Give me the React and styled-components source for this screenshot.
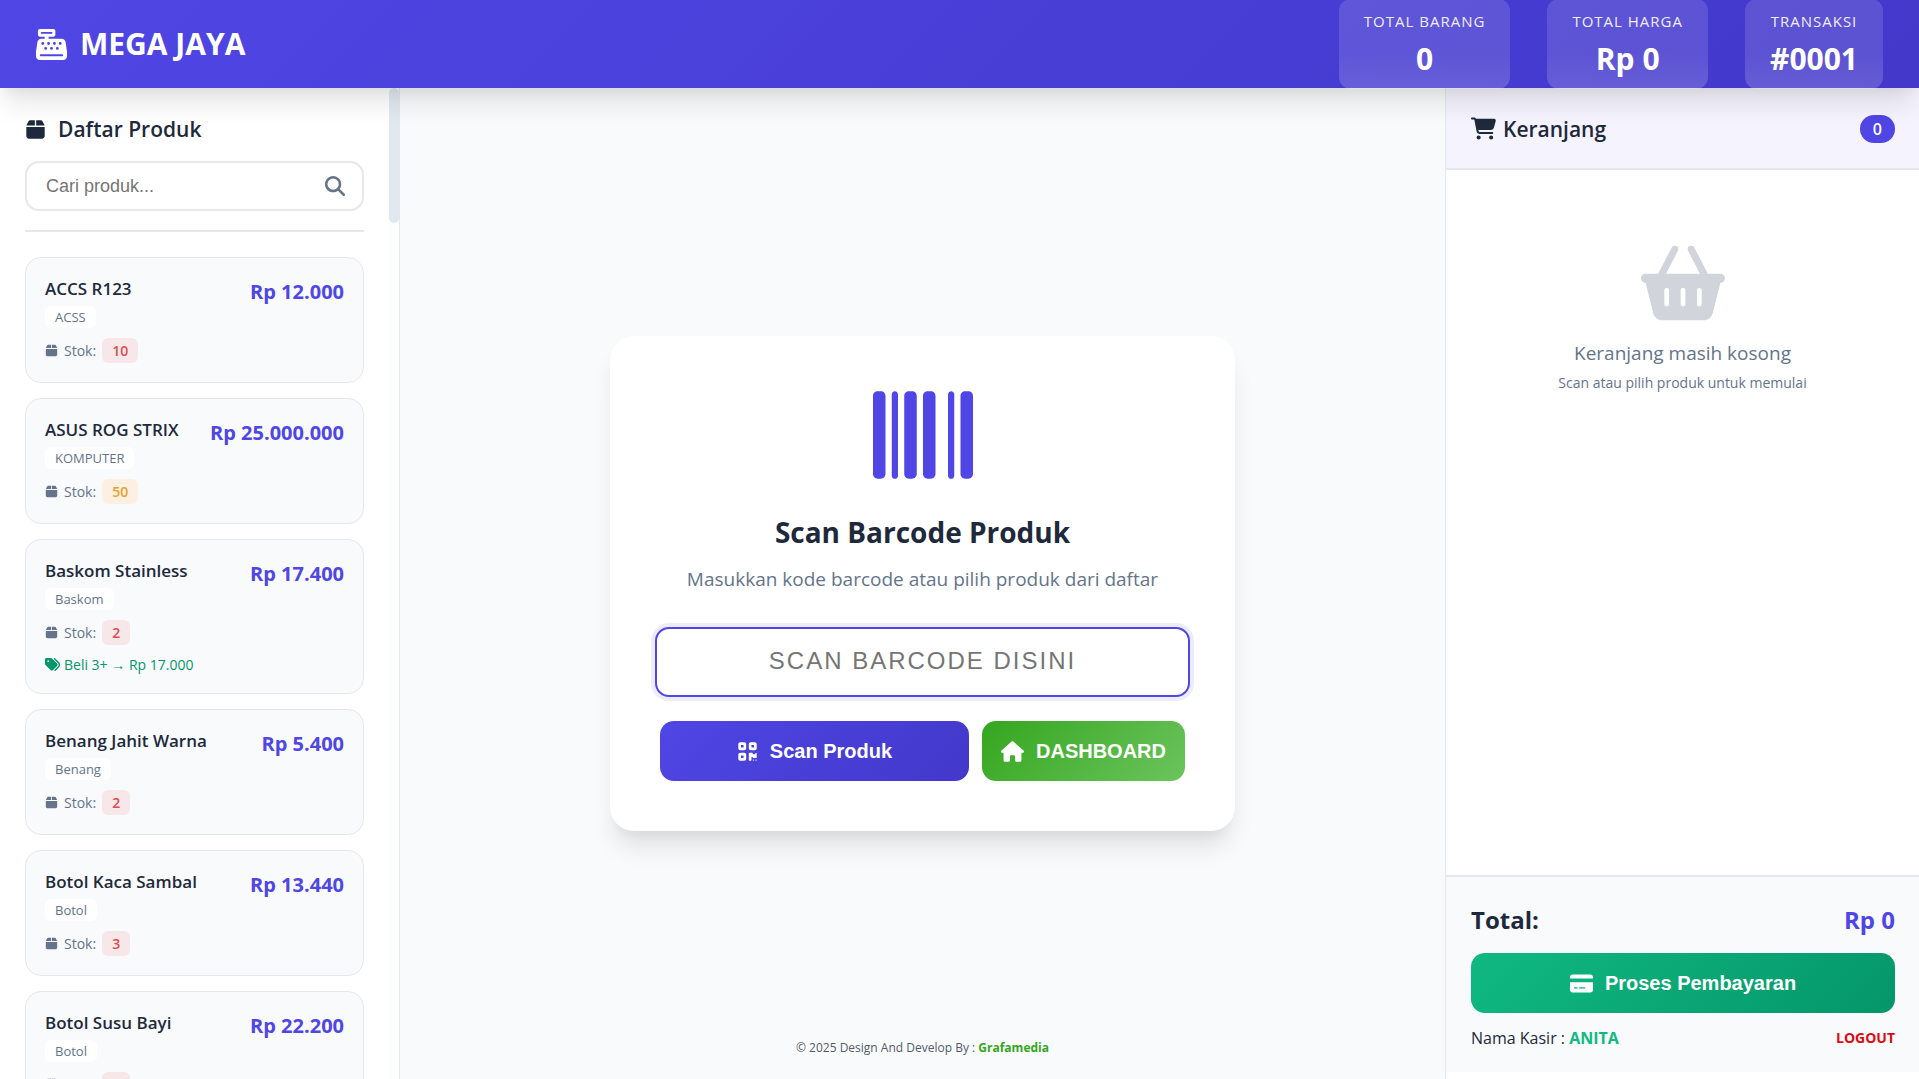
import React from "react";
import styled, { createGlobalStyle } from "styled-components";
import {
  FaCashRegister,
  FaBox,
  FaMagnifyingGlass,
  FaTags,
  FaBarcode,
  FaQrcode,
  FaHouse,
  FaCartShopping,
  FaBasketShopping,
  FaCreditCard,
} from "react-icons/fa6";

const primary = "#4f46e5";
const primaryDark = "#4338ca";
const ink = "#1e293b";
const muted = "#64748b";
const line = "#e5e7eb";
const surface = "#f8fafc";
const shadow =
  "0 20px 25px -5px rgba(0, 0, 0, 0.1), 0 10px 10px -5px rgba(0, 0, 0, 0.04)";
const controlFont = '"Liberation Sans", Arial, sans-serif';

const GlobalStyle = createGlobalStyle`
  *, *::before, *::after { box-sizing: border-box; }
  body {
    margin: 0;
    background: ${surface};
    color: ${ink};
    font-family: "Segoe UI", "Open Sans", "Noto Sans", sans-serif;
    font-size: 16px;
  }
  h1, h2, p, ul { margin: 0; padding: 0; }
  ul { list-style: none; }
  svg { display: block; flex: none; }
`;

const Page = styled.div`
  display: grid;
  grid-template-rows: 88px minmax(0, 1fr);
  height: 100vh;
  overflow: hidden;
`;

const Header = styled.header`
  display: flex;
  align-items: center;
  justify-content: space-between;
  padding: 0 36px;
  background: linear-gradient(135deg, ${primary} 0%, ${primaryDark} 100%);
  color: #fff;
  box-shadow: ${shadow};
  z-index: 1;
`;

const Brand = styled.h1`
  display: flex;
  align-items: center;
  gap: 13px;
  font-size: 30px;
  line-height: 36px;
  font-weight: 700;
`;

const Stats = styled.div`
  display: flex;
  gap: 37px;
`;

const Stat = styled.div`
  display: flex;
  flex-direction: column;
  align-items: center;
  gap: 8px;
  padding: 12px 25px 10px;
  border-radius: 12px;
  background: linear-gradient(
    180deg,
    rgba(255, 255, 255, 0.13) 60%,
    rgba(255, 255, 255, 0.18) 100%
  );
`;

const StatLabel = styled.span`
  font-size: 15px;
  line-height: 20px;
  letter-spacing: 1px;
  opacity: 0.9;
`;

const StatValue = styled.strong`
  font-size: 30px;
  line-height: 40px;
  font-weight: 700;
`;

const Columns = styled.div`
  display: grid;
  grid-template-columns: 400px minmax(0, 1fr) 474px;
  min-height: 0;
`;

const Sidebar = styled.aside`
  display: flex;
  min-height: 0;
  overflow: hidden;
  background: #fff;
  border-right: 1px solid ${line};
`;

const SidebarBody = styled.div`
  flex: 1;
  min-width: 0;
  padding: 25px 25px 0;
`;

const ScrollTrack = styled.div`
  width: 10px;
  background: #fcfdfe;
`;

const ScrollThumb = styled.div`
  height: 135px;
  border-radius: 5px;
  background: #e2e8f0;
`;

const SectionTitle = styled.h2`
  display: flex;
  align-items: center;
  gap: ${(p) => p.$gap}px;
  font-size: 21px;
  line-height: 32px;
  font-weight: 600;
`;

const SearchArea = styled.form`
  padding: 16px 0 19px;
  border-bottom: 2px solid ${line};
`;

const SearchBox = styled.div`
  display: flex;
  align-items: center;
  height: 50px;
  padding: 0 17px 0 19px;
  border: 2px solid ${line};
  border-radius: 14px;
  background: #fff;
`;

const SearchInput = styled.input`
  flex: 1;
  min-width: 0;
  padding: 0;
  border: 0;
  outline: 0;
  background: transparent;
  font-family: ${controlFont};
  font-size: 18px;
  color: ${ink};
  &::placeholder { color: #757575; }
`;

const IconButton = styled.button`
  padding: 0;
  border: 0;
  background: none;
  color: ${muted};
  cursor: pointer;
`;

const ProductList = styled.ul`
  display: grid;
  gap: 15px;
  padding-top: 25px;
`;

const ProductCard = styled.li`
  display: flex;
  justify-content: space-between;
  align-items: flex-start;
  padding: 19px;
  border: 1px solid ${line};
  border-radius: 16px;
  background: ${surface};
`;

const ProductInfo = styled.div`
  display: flex;
  flex-direction: column;
  align-items: flex-start;
`;

const ProductName = styled.span`
  font-size: 17px;
  line-height: 24px;
  font-weight: 600;
`;

const Category = styled.span`
  margin: 5px 0 10px;
  padding: 0 10px;
  border-radius: 6px;
  background: #fff;
  font-size: 13px;
  line-height: 22px;
  color: ${muted};
`;

const StockRow = styled.span`
  display: flex;
  align-items: center;
  gap: 6px;
  font-size: 14px;
  line-height: 25px;
  color: ${muted};
`;

const StockBadge = styled.span`
  padding: 0 10px;
  border-radius: 6px;
  font-weight: 600;
  color: ${(p) => (p.$low ? "#dc4c50" : "#e9a02e")};
  background: ${(p) => (p.$low ? "#f8e7e9" : "#fbf0e1")};
`;

const Wholesale = styled.span`
  display: flex;
  align-items: center;
  gap: 4px;
  margin-top: 10px;
  font-size: 14px;
  line-height: 19px;
  color: #059669;
`;

const Price = styled.strong`
  font-size: 20px;
  line-height: 30px;
  font-weight: 700;
  color: ${primary};
`;

const Main = styled.main`
  display: grid;
  grid-template-rows: 1fr auto 1fr;
  justify-items: center;
  padding: 0 24px;
`;

const ScanCard = styled.section`
  grid-row: 2;
  display: flex;
  flex-direction: column;
  align-items: center;
  width: 100%;
  max-width: 625px;
  padding: 49px 45px 50px;
  border-radius: 24px;
  background: #fff;
  box-shadow: ${shadow};
`;

const BarcodeMark = styled.div`
  color: ${primary};
`;

const ScanTitle = styled.h2`
  margin-top: 27px;
  font-size: 28px;
  line-height: 40px;
  font-weight: 700;
`;

const ScanHint = styled.p`
  margin-top: 13px;
  font-size: 19px;
  line-height: 28px;
  color: ${muted};
`;

const ScanInput = styled.input`
  width: 100%;
  height: 70px;
  margin-top: 34px;
  padding: 0 20px 2px;
  border: 2px solid ${primary};
  border-radius: 14px;
  outline: 0;
  background: #fff;
  box-shadow: 0 0 0 4px rgba(79, 70, 229, 0.1);
  font-family: ${controlFont};
  font-size: 24px;
  letter-spacing: 2px;
  text-align: center;
  &::placeholder { color: #757575; }
`;

const ButtonRow = styled.div`
  display: flex;
  gap: 13px;
  width: 100%;
  margin-top: 24px;
  padding: 0 5px;
`;

const Button = styled.button`
  display: flex;
  align-items: center;
  justify-content: center;
  gap: 12px;
  flex: ${(p) => (p.$grow ? 1 : "none")};
  width: ${(p) => (p.$block ? "100%" : "auto")};
  height: 60px;
  padding: 0 19px;
  border: 0;
  border-radius: 14px;
  background: linear-gradient(135deg, ${(p) => p.$from} 0%, ${(p) => p.$to} 100%);
  color: #fff;
  font-family: ${controlFont};
  font-size: 20px;
  font-weight: 700;
  cursor: pointer;
`;

const Credit = styled.footer`
  grid-row: 3;
  align-self: end;
  padding-bottom: 21px;
  font-size: 12px;
  line-height: 20px;
  color: #555b66;
`;

const TextLink = styled.a`
  font-weight: 700;
  text-decoration: none;
  color: ${(p) => p.$color};
`;

const Cart = styled.aside`
  display: flex;
  flex-direction: column;
  min-height: 0;
  padding-bottom: 7px;
  border-left: 1px solid ${line};
  background: #fff;
`;

const CartHeader = styled.div`
  display: flex;
  align-items: center;
  justify-content: space-between;
  height: 82px;
  padding: 1px 24px 0 25px;
  border-bottom: 2px solid ${line};
  background: #f5f4fe;
`;

const CountBadge = styled.span`
  padding: 0 13px;
  border-radius: 14px;
  background: ${primary};
  color: #fff;
  font-size: 16px;
  line-height: 28px;
  font-weight: 600;
`;

const EmptyCart = styled.div`
  flex: 1;
  display: flex;
  flex-direction: column;
  align-items: center;
  padding-top: 71px;
  color: ${muted};
`;

const BasketMark = styled.div`
  color: #d1d5db;
`;

const EmptyTitle = styled.p`
  margin-top: 14px;
  font-size: 19px;
  line-height: 28px;
`;

const EmptyHint = styled.p`
  margin-top: 6px;
  font-size: 14px;
  line-height: 20px;
`;

const CartFooter = styled.div`
  padding: 25px 24px 22px 25px;
  border-top: 2px solid ${line};
  background: ${surface};
`;

const TotalRow = styled.div`
  display: flex;
  justify-content: space-between;
  margin-bottom: 15px;
  font-size: 24px;
  line-height: 36px;
  font-weight: 700;
`;

const TotalValue = styled.span`
  color: ${primary};
`;

const CashierRow = styled.div`
  display: flex;
  align-items: center;
  justify-content: space-between;
  margin-top: 13px;
  font-size: 16px;
  line-height: 24px;
`;

const CashierName = styled.strong`
  color: #10b981;
`;

const Logout = styled(TextLink)`
  font-size: 14px;
`;

const products = [
  { name: "ACCS R123", category: "ACSS", stock: 10, price: "Rp 12.000" },
  { name: "ASUS ROG STRIX", category: "KOMPUTER", stock: 50, price: "Rp 25.000.000" },
  { name: "Baskom Stainless", category: "Baskom", stock: 2, price: "Rp 17.400", wholesale: "Beli 3+ → Rp 17.000" },
  { name: "Benang Jahit Warna", category: "Benang", stock: 2, price: "Rp 5.400" },
  { name: "Botol Kaca Sambal", category: "Botol", stock: 3, price: "Rp 13.440" },
  { name: "Botol Susu Bayi", category: "Botol", stock: 3, price: "Rp 22.200" },
];

const stats = [
  { label: "TOTAL BARANG", value: "0" },
  { label: "TOTAL HARGA", value: "Rp 0" },
  { label: "TRANSAKSI", value: "#0001" },
];

function Product({ item }) {
  return (
    <ProductCard>
      <ProductInfo>
        <ProductName>{item.name}</ProductName>
        <Category>{item.category}</Category>
        <StockRow>
          <FaBox size={13} />
          Stok:
          <StockBadge $low={item.stock <= 10}>{item.stock}</StockBadge>
        </StockRow>
        {item.wholesale && (
          <Wholesale>
            <FaTags size={15} />
            {item.wholesale}
          </Wholesale>
        )}
      </ProductInfo>
      <Price>{item.price}</Price>
    </ProductCard>
  );
}

export default function App() {
  return (
    <>
      <GlobalStyle />
      <Page>
        <Header>
          <Brand>
            <FaCashRegister size={31} />
            MEGA JAYA
          </Brand>
          <Stats>
            {stats.map((s) => (
              <Stat key={s.label}>
                <StatLabel>{s.label}</StatLabel>
                <StatValue>{s.value}</StatValue>
              </Stat>
            ))}
          </Stats>
        </Header>
        <Columns>
          <Sidebar>
            <SidebarBody>
              <SectionTitle $gap={12}>
                <FaBox size={21} />
                Daftar Produk
              </SectionTitle>
              <SearchArea onSubmit={(e) => e.preventDefault()}>
                <SearchBox>
                  <SearchInput type="text" aria-label="Cari produk" placeholder="Cari produk..." />
                  <IconButton type="submit" aria-label="Cari">
                    <FaMagnifyingGlass size={20} />
                  </IconButton>
                </SearchBox>
              </SearchArea>
              <ProductList>
                {products.map((p) => (
                  <Product key={p.name} item={p} />
                ))}
              </ProductList>
            </SidebarBody>
            <ScrollTrack>
              <ScrollThumb />
            </ScrollTrack>
          </Sidebar>
          <Main>
            <ScanCard>
              <BarcodeMark>
                <FaBarcode size={100} />
              </BarcodeMark>
              <ScanTitle>Scan Barcode Produk</ScanTitle>
              <ScanHint>Masukkan kode barcode atau pilih produk dari daftar</ScanHint>
              <ScanInput type="text" aria-label="Kode barcode" placeholder="SCAN BARCODE DISINI" />
              <ButtonRow>
                <Button type="button" $grow $from={primary} $to={primaryDark}>
                  <FaQrcode size={21} />
                  Scan Produk
                </Button>
                <Button type="button" $from="#34a61e" $to="#6cc45e">
                  <FaHouse size={23} />
                  DASHBOARD
                </Button>
              </ButtonRow>
            </ScanCard>
            <Credit>
              © 2025 Design And Develop By :{" "}
              <TextLink href="#grafamedia" $color="#34a61e">Grafamedia</TextLink>
            </Credit>
          </Main>
          <Cart>
            <CartHeader>
              <SectionTitle $gap={7}>
                <FaCartShopping size={25} />
                Keranjang
              </SectionTitle>
              <CountBadge>0</CountBadge>
            </CartHeader>
            <EmptyCart>
              <BasketMark>
                <FaBasketShopping size={84} />
              </BasketMark>
              <EmptyTitle>Keranjang masih kosong</EmptyTitle>
              <EmptyHint>Scan atau pilih produk untuk memulai</EmptyHint>
            </EmptyCart>
            <CartFooter>
              <TotalRow>
                <span>Total:</span>
                <TotalValue>Rp 0</TotalValue>
              </TotalRow>
              <Button type="button" $block $from="#10b981" $to="#059669">
                <FaCreditCard size={23} />
                Proses Pembayaran
              </Button>
              <CashierRow>
                <span>
                  Nama Kasir : <CashierName>ANITA</CashierName>
                </span>
                <Logout href="#logout" $color="#dc0a14">LOGOUT</Logout>
              </CashierRow>
            </CartFooter>
          </Cart>
        </Columns>
      </Page>
    </>
  );
}
